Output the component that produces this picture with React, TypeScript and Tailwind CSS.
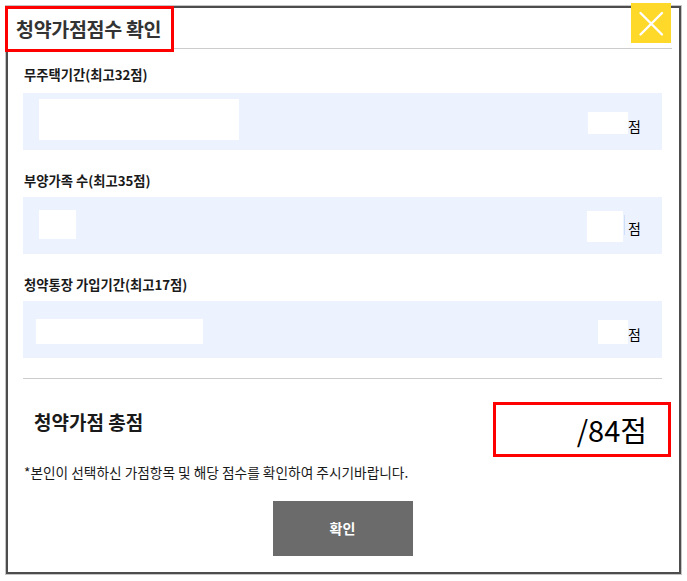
import React from "react";

const font = { fontFamily: '"Noto Sans CJK KR", "Noto Sans", sans-serif' };

export default function App() {
  return (
    <div className="pl-[6px] pt-[6px] bg-white min-h-[581px]" style={font}>
      <div className="relative w-[675px] h-[568px] border-2 border-[#4d4d4d] shadow-[0_0_0_1px_#c4c4c4] bg-white">
        {/* Header */}
        <div className="h-[43px] mr-[7px] border-b border-[#cccccc]">
          <div className="-ml-[3px] -mt-[2px] h-[46px] w-[169px] border-[3px] border-[#ff0000] flex items-center pl-[8px] bg-white">
            <span className="text-[19.5px] font-bold text-[#333333] leading-none tracking-[-0.3px] whitespace-nowrap">청약가점점수 확인</span>
          </div>
        </div>
        <button className="absolute left-[623px] -top-[5px] w-10 h-10 bg-[#ffd92a] flex items-center justify-center">
          <svg width="40" height="40" viewBox="0 0 40 40">
            <path d="M9.5 10 L31 31.5 M31 10 L9.5 31.5" stroke="#ffffff" strokeWidth="2.4" strokeLinecap="round" fill="none" />
          </svg>
        </button>

        {/* Body */}
        <div className="pl-[15px] pr-[17px]">
          {/* Section 1 */}
          <div className="mt-[16px] mb-[8px] pl-[1px] text-[13.3px] leading-[20px] font-bold text-[#1a1a1a] whitespace-nowrap">무주택기간(최고32점)</div>
          <div className="h-[57px] bg-[#edf3fe] flex items-start">
            <div className="ml-[16px] mt-[6px] w-[200px] h-[41px] bg-white" />
            <div className="ml-auto mr-[21px] flex items-start">
              <div className="mt-[19px] w-[40px] h-[22px] bg-white" />
              <span className="mt-[23px] text-[14px] leading-[20px] text-black">점</span>
            </div>
          </div>

          {/* Section 2 */}
          <div className="mt-[21px] mb-[6px] pl-[1px] text-[13.3px] leading-[20px] font-bold text-[#1a1a1a] whitespace-nowrap">부양가족 수(최고35점)</div>
          <div className="h-[57px] bg-[#edf3fe] flex items-start">
            <div className="ml-[16px] mt-[13px] w-[37px] h-[29px] bg-white" />
            <div className="ml-auto mr-[21px] flex items-start">
              <div className="mt-[14px] w-[36px] h-[31px] bg-white" />
              <div className="mt-[18px] ml-[1px] w-px h-[20px] bg-[#cfdff7]" />
              <span className="ml-[3px] mt-[21px] text-[14px] leading-[20px] text-black">점</span>
            </div>
          </div>

          {/* Section 3 */}
          <div className="mt-[21px] mb-[6px] pl-[1px] text-[13.3px] leading-[20px] font-bold text-[#1a1a1a] whitespace-nowrap">청약통장 가입기간(최고17점)</div>
          <div className="h-[57px] bg-[#edf3fe] flex items-start">
            <div className="ml-[13px] mt-[18px] w-[167px] h-[25px] bg-white" />
            <div className="ml-auto mr-[21px] flex items-start">
              <div className="mt-[19px] w-[30px] h-[24px] bg-white" />
              <span className="mt-[23px] text-[14px] leading-[20px] text-black">점</span>
            </div>
          </div>

          <div className="mt-[20px] h-px bg-[#cccccc]" />

          {/* Total */}
          <div className="mt-[23px] flex items-start justify-between">
            <span className="pl-[11px] mt-[7px] text-[19px] leading-[26px] font-bold text-[#1a1a1a]">청약가점 총점</span>
            <div className="-mr-[9px] w-[178px] h-[55px] border-[3px] border-[#ff0000] flex items-center justify-end pr-[21px]">
              <span className="text-[29px] leading-none text-black">/84점</span>
            </div>
          </div>

          <div className="mt-[6px] pl-[1px] text-[13.7px] leading-[18px] text-[#1a1a1a] whitespace-nowrap">*본인이 선택하신 가점항목 및 해당 점수를 확인하여 주시기바랍니다.</div>

          <div className="mt-[20px] flex justify-center">
            <button className="w-[140px] h-[55px] bg-[#6b6b6b] text-white text-[14px] font-bold">확인</button>
          </div>
        </div>
      </div>
    </div>
  );
}
